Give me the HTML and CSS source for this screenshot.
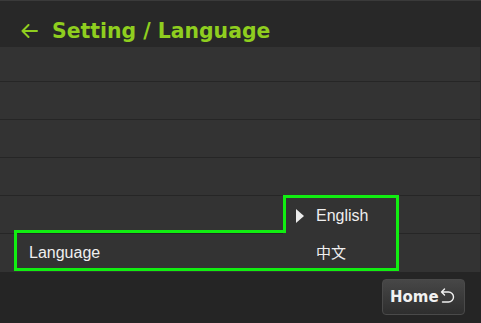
FILE: index.html
```html
<!DOCTYPE html>
<html lang="en">
<head>
<meta charset="utf-8">
<title>Setting / Language</title>
<link rel="stylesheet" href="styles.css">
</head>
<body>
<div class="screen">
  <header class="header">
    <svg class="back" width="18" height="14" viewBox="0 0 18 14" aria-hidden="true">
      <path d="M17 7 H2.5 M8.5 1 L2.5 7 L8.5 13" fill="none" stroke="#8fce1f" stroke-width="2" stroke-linecap="round" stroke-linejoin="round"/>
    </svg>
    <h1 class="title">Setting / Language</h1>
  </header>
  <div class="list">
    <div class="row row-first"></div>
    <div class="row"></div>
    <div class="row"></div>
    <div class="row"></div>
    <div class="row"></div>
    <div class="row row-language">
      <div class="focus-ring"></div>
      <span class="label">Language</span>
      <ul class="dropdown">
        <li class="option option-selected"><span class="caret"></span>English</li>
        <li class="option option-cjk">中文</li>
      </ul>
    </div>
  </div>
  <footer class="footer">
    <button class="home-btn">Home<svg class="return" width="16" height="18" viewBox="0 0 16 18" aria-hidden="true">
      <path d="M2.5 5 H9.5 A5 5 0 0 1 9.5 15 H3.5 M5.5 2 L2.5 5 L5.5 8" fill="none" stroke="#f0f0f0" stroke-width="1.4" stroke-linecap="round" stroke-linejoin="round"/>
    </svg></button>
  </footer>
</div>
</body>
</html>
```
FILE: styles.css
```css
* { box-sizing: border-box; }
html, body { margin: 0; padding: 0; }
body {
  background: #252525;
  font-family: "Liberation Sans", Arial, sans-serif;
}
.screen {
  width: 481px;
  height: 323px;
  display: flex;
  flex-direction: column;
  overflow: hidden;
}
.header {
  height: 47px;
  background: #282828;
  border-top: 1px solid #3a3a3a;
  padding: 18px 0 0 20px;
  display: flex;
  align-items: flex-start;
  gap: 14px;
}
.back { margin-top: 5px; flex: none; }
.title {
  margin: 0;
  font-family: "DejaVu Sans", Verdana, sans-serif;
  font-weight: bold;
  font-size: 20.4px;
  line-height: 24px;
  color: #8fce1f;
}
.list {
  display: flex;
  flex-direction: column;
  background: #333333;
  border-right: 1px solid #2a2a2a;
}
.row {
  height: 38px;
  border-bottom: 1px solid #262626;
  background: #333333;
}
.row-first { height: 35px; }
.row-language {
  position: relative;
  display: flex;
  align-items: center;
  padding-left: 29px;
  border-bottom: 0;
}
.label {
  font-size: 16px;
  color: #efefef;
}
.focus-ring {
  position: absolute;
  left: 14px;
  top: -4px;
  width: 272px;
  height: 41px;
  border: 3px solid #11ee11;
  border-right: 0;
}
.dropdown {
  position: absolute;
  left: 283px;
  top: -39px;
  width: 116px;
  height: 76px;
  margin: 0;
  padding: 0 0 0 3px;
  list-style: none;
  background: #333333;
  border: 3px solid #11ee11;
  border-left: 0;
}
.dropdown::before {
  content: "";
  position: absolute;
  left: 0;
  top: -3px;
  width: 3px;
  height: 38px;
  background: #11ee11;
}
.option {
  height: 35px;
  display: flex;
  align-items: center;
  font-size: 16px;
  color: #efefef;
}
.option-selected { padding-left: 10px; gap: 12px; }
.caret {
  width: 0;
  height: 0;
  border-left: 8px solid #ececec;
  border-top: 7px solid transparent;
  border-bottom: 7px solid transparent;
}
.option-cjk {
  padding-left: 30px;
  padding-top: 2px;
  font-family: "Noto Sans CJK SC", sans-serif;
  font-size: 15px;
}
.footer {
  flex: 1;
  background: #252525;
  display: flex;
  justify-content: flex-end;
  align-items: flex-start;
  padding: 7px 16px 0 0;
}
.home-btn {
  width: 83px;
  height: 36px;
  border: 1px solid #4a4a4a;
  border-radius: 4px;
  background: linear-gradient(#474747, #2e2e2e);
  color: #f2f2f2;
  font-family: "DejaVu Sans", Verdana, sans-serif;
  font-weight: bold;
  font-size: 15px;
  display: flex;
  align-items: center;
  padding: 0 0 0 7px;
  gap: 0;
}
.return { flex: none; margin-top: -2px; }
```
